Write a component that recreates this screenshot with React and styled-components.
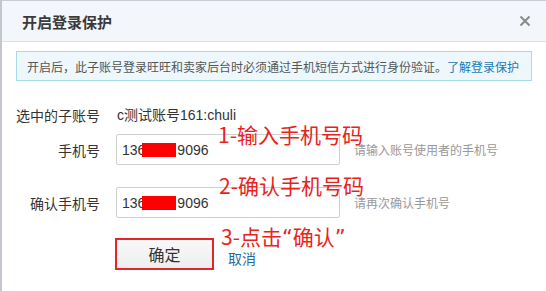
import React from 'react'
import styled, { createGlobalStyle } from 'styled-components'

const GlobalStyle = createGlobalStyle`
    html, body {
        margin: 0;
        padding: 0;
        background: #fff;
    }
    body {
        font-family: "Liberation Sans", "Noto Sans CJK SC", sans-serif;
        color: #333;
    }
`

const Dialog = styled.div`
    position: relative;
    width: 546px;
    height: 291px;
    box-sizing: border-box;
    border-left: 2px solid #c2c6cd;
    border-top: 1px solid #c8ccd2;
    background: #fff;
    overflow: hidden;
`

const Header = styled.div`
    height: 40px;
    display: flex;
    align-items: center;
    justify-content: space-between;
    padding: 0 15px 0 20px;
    background: #f3f6fa;
    border-bottom: 1px solid #dce1e7;
`

const Title = styled.h3`
    margin: 0;
    font-family: "Noto Sans CJK SC", sans-serif;
    font-size: 15px;
    font-weight: 700;
    color: #3a3a3a;
`

const Close = styled.button`
    border: 0;
    padding: 0;
    background: none;
    width: 12px;
    height: 12px;
    display: flex;
    cursor: pointer;
`

const Body = styled.div`
    padding: 9px 14px 0;
`

const Notice = styled.div`
    height: 30px;
    box-sizing: border-box;
    display: flex;
    align-items: center;
    padding-left: 10px;
    border: 1px solid #a6dae8;
    background: #eef8fc;
    font-family: "Noto Sans CJK SC", sans-serif;
    font-size: 12px;
    color: #555;
`

const Link = styled.a`
    color: ${p => p.$muted ? '#1f6e9e' : '#1a7ab8'};
    text-decoration: none;
    cursor: pointer;
    font-size: ${p => p.$size || 12}px;
    margin-top: ${p => p.$drop || 0}px;
`

const Form = styled.div`
    display: flex;
    flex-direction: column;
    margin-top: 24px;
`

const Row = styled.div`
    display: grid;
    grid-template-columns: 84px auto 1fr;
    column-gap: 16px;
    align-items: center;
    margin-top: ${p => p.$gap || 0}px;
    min-height: ${p => p.$height || 20}px;
`

const Label = styled.label`
    text-align: right;
    font-family: "Noto Sans CJK SC", sans-serif;
    font-size: 14px;
    line-height: 20px;
    color: #333;
`

const Value = styled.span`
    font-size: 14px;
    line-height: 20px;
    color: #333;
    margin-left: 1px;
`

const Field = styled.div`
    width: 224px;
    height: 31px;
    box-sizing: border-box;
    display: flex;
    align-items: center;
    padding-left: 5px;
    border: 1px solid #cfcfcf;
    border-radius: 2px;
    background: #fff;
    font-size: 14px;
    color: #333;
`

const Redact = styled.span`
    display: inline-block;
    width: 34px;
    height: 14px;
    margin: 0 1px 0 -3px;
    background: #f00;
`

const Hint = styled.span`
    margin-left: -2px;
    font-family: "Noto Sans CJK SC", sans-serif;
    font-size: 12px;
    color: #999;
`

const Actions = styled.div`
    display: flex;
    align-items: center;
    gap: 14px;
    margin-left: -1px;
`

const Button = styled.button`
    width: 99px;
    height: 32px;
    box-sizing: border-box;
    border: 2px solid #e3262a;
    background: linear-gradient(#f8f8f8, #eeeeee);
    font-family: "Noto Sans CJK SC", sans-serif;
    font-size: 16px;
    color: #333;
    padding: 0;
    cursor: pointer;
`

const Note = styled.div`
    position: absolute;
    left: ${p => p.$x}px;
    top: ${p => p.$y}px;
    font-family: "Noto Sans CJK SC", sans-serif;
    font-size: 21px;
    line-height: 18px;
    color: #e8231b;
    white-space: nowrap;
`

const Quote = styled.span`
    font-family: "DejaVu Sans", sans-serif;
    font-size: 21px;
`

function CloseIcon() {
    return (
        <svg width="12" height="12" viewBox="0 0 12 12">
            <path d="M1.5 1.5 L10.5 10.5 M10.5 1.5 L1.5 10.5" stroke="#8a8a8a" strokeWidth="2" />
        </svg>
    )
}

export default function App() {
    return (
        <>
            <GlobalStyle />
            <Dialog>
                <Header>
                    <Title>开启登录保护</Title>
                    <Close aria-label="关闭"><CloseIcon /></Close>
                </Header>
                <Body>
                    <Notice>
                        开启后，此子账号登录旺旺和卖家后台时必须通过手机短信方式进行身份验证。
                        <Link>了解登录保护</Link>
                    </Notice>
                    <Form>
                        <Row>
                            <Label>选中的子账号</Label>
                            <Value>c测试账号161:chuli</Value>
                        </Row>
                        <Row $gap={9} $height={31}>
                            <Label>手机号</Label>
                            <Field>136<Redact />9096</Field>
                            <Hint>请输入账号使用者的手机号</Hint>
                        </Row>
                        <Row $gap={22} $height={31}>
                            <Label>确认手机号</Label>
                            <Field>136<Redact />9096</Field>
                            <Hint>请再次确认手机号</Hint>
                        </Row>
                        <Row $gap={20} $height={32}>
                            <span />
                            <Actions>
                                <Button>确定</Button>
                                <Link $muted $size={14} $drop={8}>取消</Link>
                            </Actions>
                        </Row>
                    </Form>
                </Body>
                <Note $x={216} $y={124}>1-输入手机号码</Note>
                <Note $x={217} $y={175}>2-确认手机号码</Note>
                <Note $x={219} $y={226}>3-点击<Quote>“</Quote>确认<Quote>”</Quote></Note>
            </Dialog>
        </>
    )
}
